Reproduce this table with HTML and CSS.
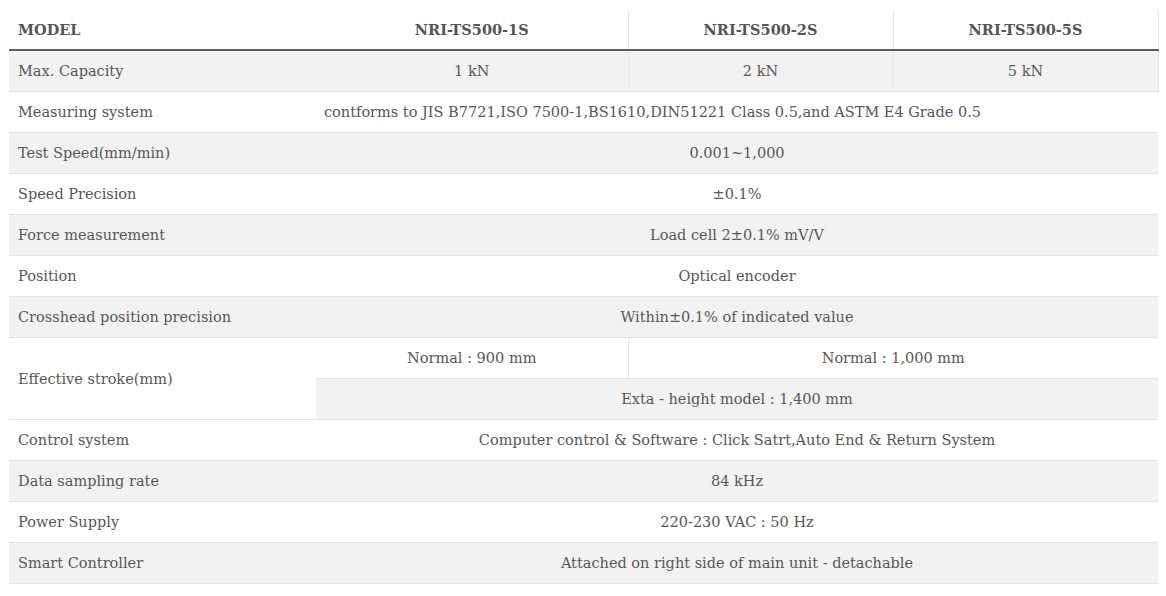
FILE: index.html
```html
<!DOCTYPE html>
<html>
<head>
<meta charset="utf-8">
<link rel="stylesheet" href="styles.css">
</head>
<body>
<table class="spec">
  <colgroup>
    <col class="c1"><col class="c2"><col class="c3"><col class="c4">
  </colgroup>
  <thead>
    <tr>
      <th class="label">MODEL</th>
      <th class="sep">NRI-TS500-1S</th>
      <th class="sep">NRI-TS500-2S</th>
      <th class="sep">NRI-TS500-5S</th>
    </tr>
  </thead>
  <tbody>
    <tr>
      <td class="label">Max. Capacity</td>
      <td class="sep">1 kN</td>
      <td class="sep">2 kN</td>
      <td class="sep">5 kN</td>
    </tr>
    <tr><td class="label">Measuring system</td><td colspan="3" class="left">contforms to JIS B7721,ISO 7500-1,BS1610,DIN51221 Class 0.5,and ASTM E4 Grade 0.5</td></tr>
    <tr><td class="label">Test Speed(mm/min)</td><td colspan="3">0.001~1,000</td></tr>
    <tr><td class="label">Speed Precision</td><td colspan="3">±0.1%</td></tr>
    <tr><td class="label">Force measurement</td><td colspan="3">Load cell 2±0.1% mV/V</td></tr>
    <tr><td class="label">Position</td><td colspan="3">Optical encoder</td></tr>
    <tr><td class="label">Crosshead position precision</td><td colspan="3">Within±0.1% of indicated value</td></tr>
    <tr>
      <td class="label" rowspan="2">Effective stroke(mm)</td>
      <td class="sep">Normal : 900 mm</td>
      <td colspan="2">Normal : 1,000 mm</td>
    </tr>
    <tr><td colspan="3" class="sub">Exta - height model : 1,400 mm</td></tr>
    <tr><td class="label">Control system</td><td colspan="3">Computer control &amp; Software : Click Satrt,Auto End &amp; Return System</td></tr>
    <tr><td class="label">Data sampling rate</td><td colspan="3">84 kHz</td></tr>
    <tr><td class="label">Power Supply</td><td colspan="3">220-230 VAC : 50 Hz</td></tr>
    <tr><td class="label">Smart Controller</td><td colspan="3">Attached on right side of main unit - detachable</td></tr>
  </tbody>
</table>
</body>
</html>
```

FILE: styles.css
```css
html, body {
  margin: 0;
  padding: 0;
  background: #ffffff;
}
body {
  padding: 10px 9px 0 9px;
  font-family: "DejaVu Serif", "Liberation Serif", serif;
  font-size: 14.5px;
  color: #575757;
}
.spec {
  width: 1149px;
  border-collapse: collapse;
  table-layout: fixed;
}
.c1 { width: 307px; }
.c2 { width: 312px; }
.c3 { width: 265px; }
.c4 { width: 265px; }
.spec th, .spec td {
  height: 41px;
  padding: 1px 9px 0 9px;
  text-align: center;
  vertical-align: middle;
  border-bottom: 1px solid #e3e3e3;
  box-sizing: border-box;
  line-height: 20px;
}
.spec th {
  font-weight: bold;
  color: #555555;
  border-bottom: 2px solid #5c5c5c;
  height: 40px;
}
.spec .label {
  text-align: left;
}
.spec .left {
  text-align: left;
  padding-left: 8px;
}
.spec .sep {
  border-right: 1px solid #e6e6e6;
}
.spec tbody tr:nth-child(odd) {
  background: #f2f2f2;
}
.spec tbody tr:nth-child(even) {
  background: #ffffff;
}
```
